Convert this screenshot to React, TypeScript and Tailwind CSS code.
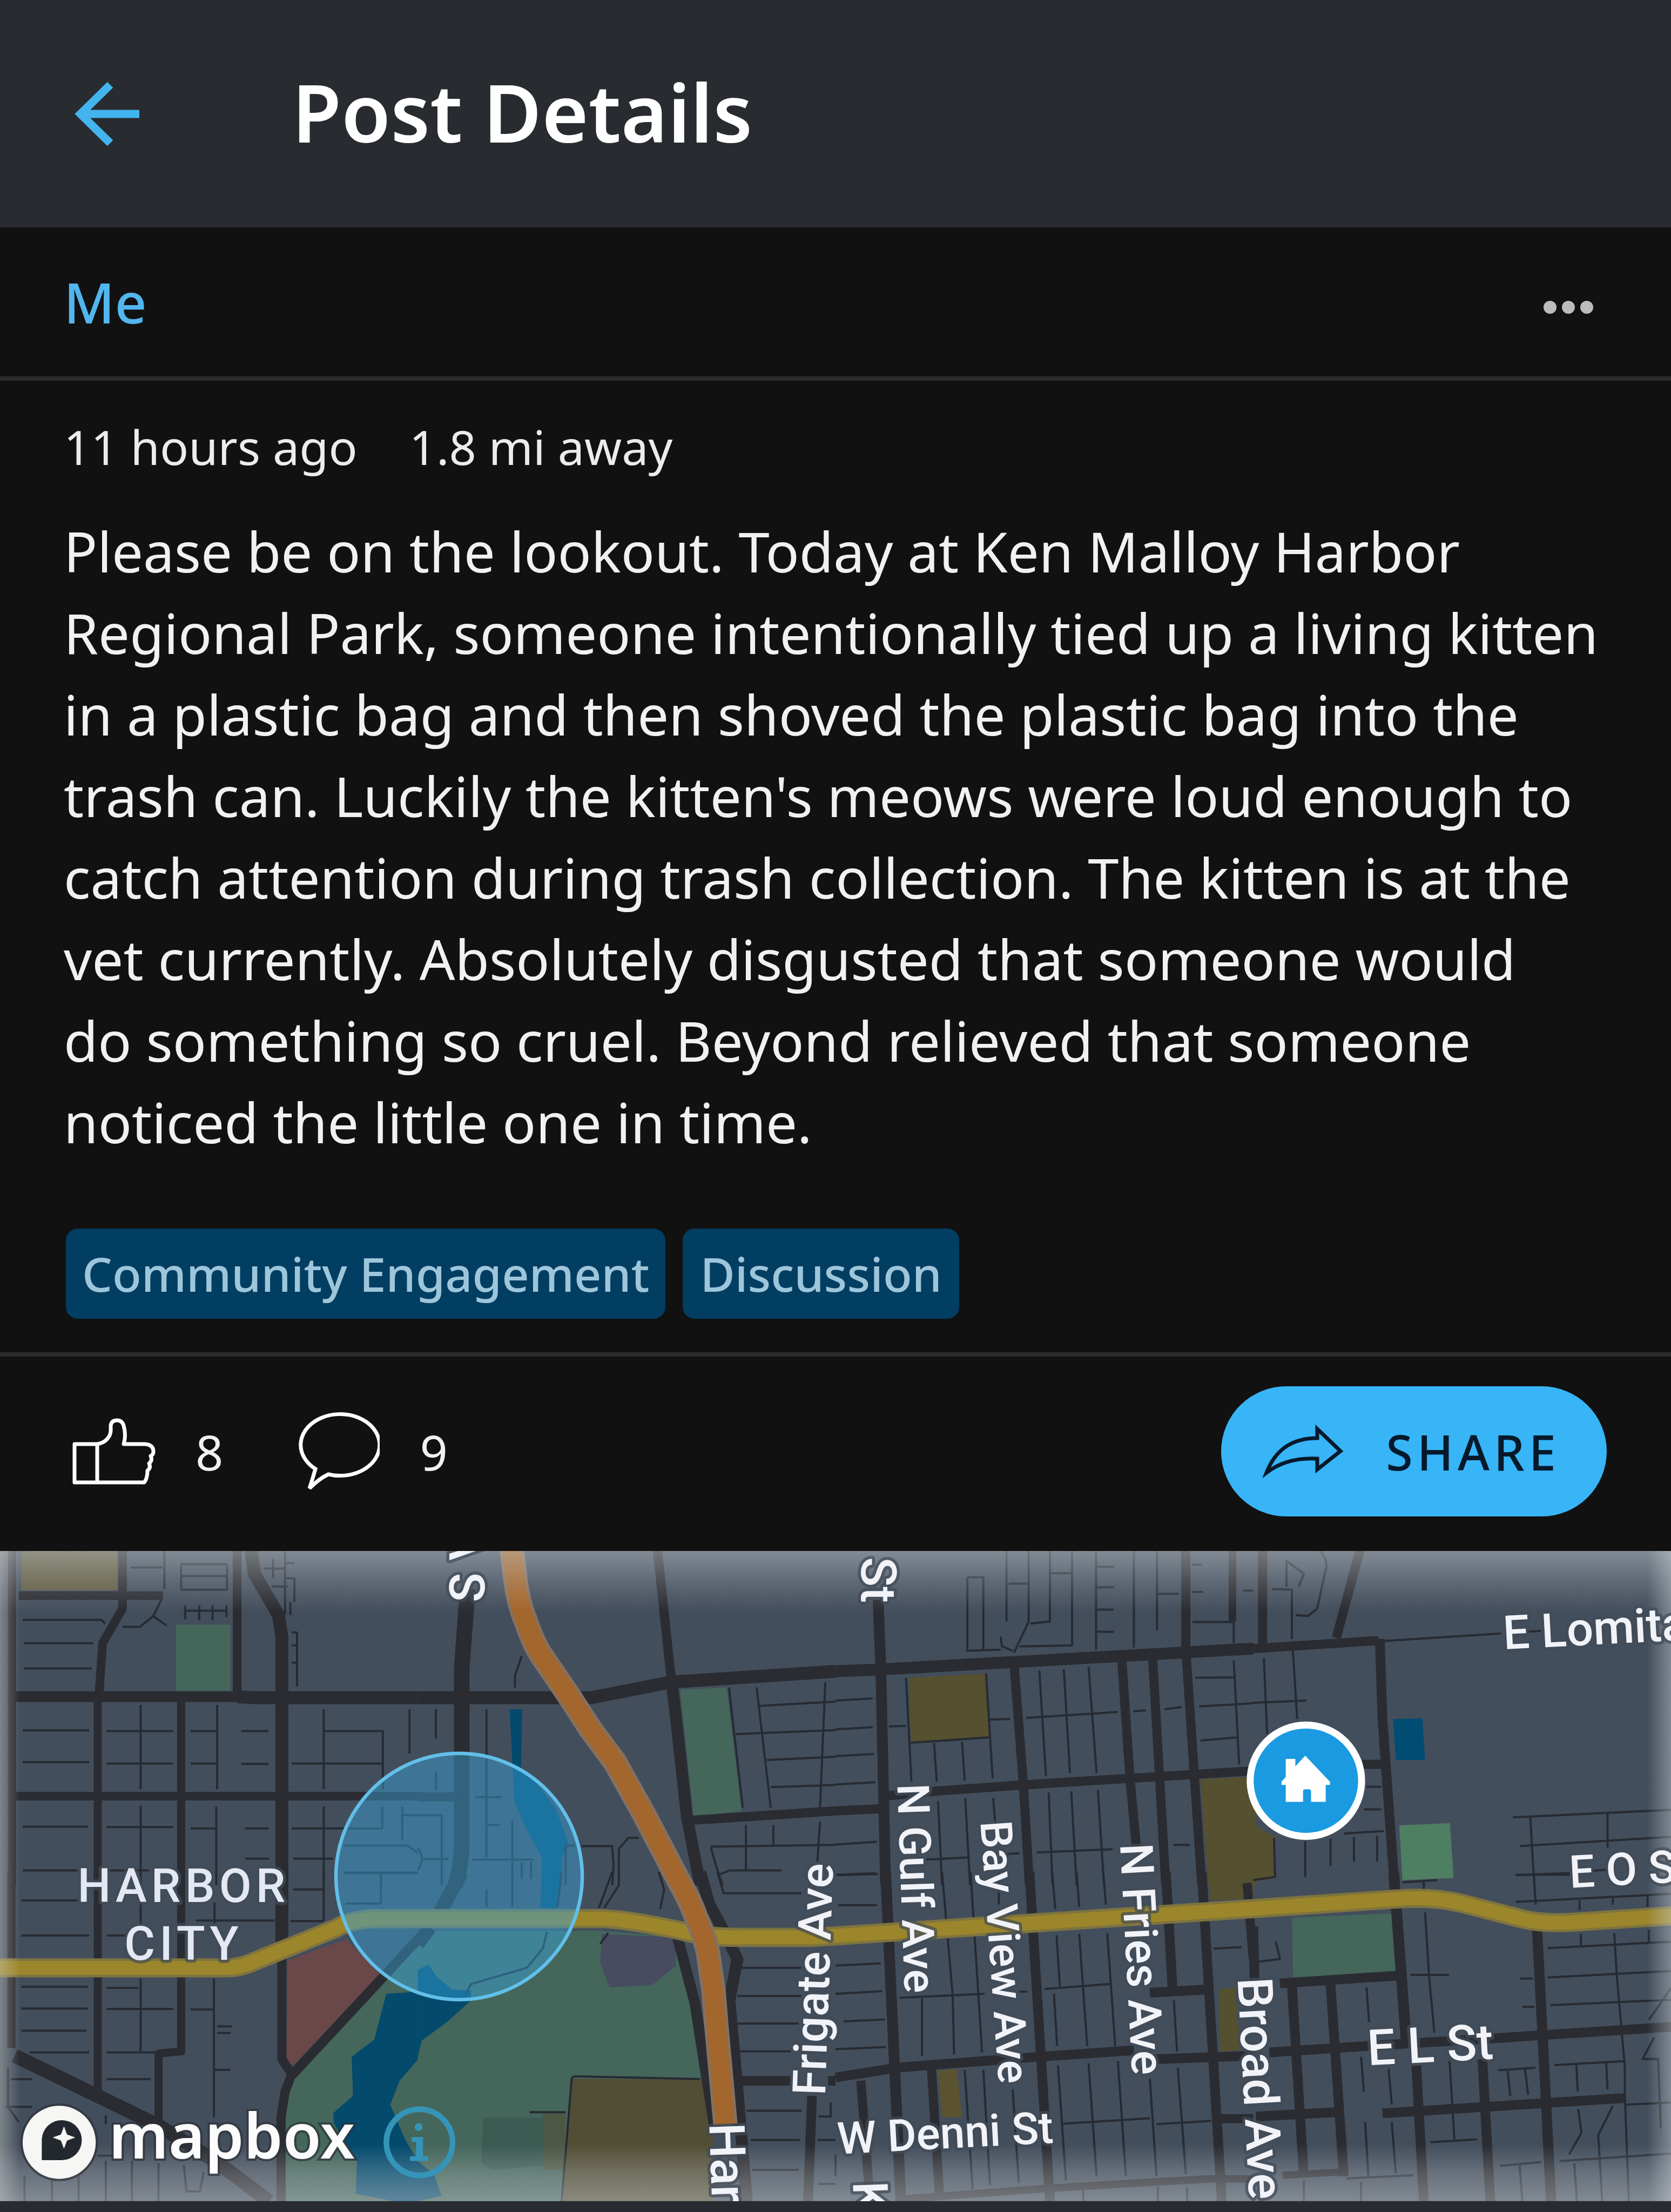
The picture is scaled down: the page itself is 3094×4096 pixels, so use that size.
type Road = { w: number; d: string };
type Area = { fill: string; d: string };
type Tile = { x: number; y: number; sy: number; areas: Area[]; minor: string; roads: Road[] };

const GREEN = "#44665b";
const BROWN = "#55502f";
const WATER = "#034a6d";
const ROAD = "#2a2c31";

const tiles: Tile[] = [
  {
    x: 0, y: 3550, sy: 0.4974,
    areas: [
      { fill: "#5f5b40", d: "M80 0H440V205H80Z" },
      { fill: GREEN, d: "M660 365H865V670H660Z" },
    ],
    minor:
      "M85 342H380L395 360M90 450H350M90 567H345M460 375H525L575 325L605 250M575 325L625 368M490 100H610M617 0V200M680 85H852M680 140H852M680 203H852M680 85V203M852 85V203M695 275V340M748 275V345M798 275V345M690 300H850M850 275V330M1070 0V320M990 105H1070M1025 60V150M1020 188H1080M1115 400V650M1095 400H1115M1095 460H1115M1095 540H1115M1075 80H1105M1075 150H1105V260M1090 260V320M85 853H335M85 1000H335M85 1298H330M85 1500H290M400 856H650M400 1006H650M400 1300H650M400 1500H560M528 735V1125M528 1200V1568M715 856H812M715 1006H812M715 1306H808M815 735V1125M812 1205V1568M905 856H1008M905 1008H1008M920 1306H1008M920 1446H1010M1215 755V1125M1215 1205V1568M1215 856H1437V1125M1095 1006H1435M1537 755V960M1095 1306H1435V1205M1100 1446H1250M1290 1385H1530L1568 1420M1290 1510H1568M1430 1520V1568M1510 1205V1360M1510 1245H1568",
    roads: [
      { w: 15, d: "M45 0V1568M367 700V1568M680 695V1568" },
      { w: 16, d: "M460 0V290L385 450L370 720M70 230H612M890 0V690M60 1157H1568" },
      { w: 20, d: "M60 697H890" },
      { w: 24, d: "M940 0L955 130L1045 320L1058 420V1568M890 697L960 702H1568" },
    ],
  },
  {
    x: 960, y: 3550, sy: 0.4974,
    areas: [
      { fill: GREEN, d: "M985 665L1160 655L1215 1225L1035 1250Z" },
      { fill: WATER, d: "M345 755H392L388 1030L450 1100L520 1220L565 1370L540 1450V1568H465V1440L400 1290L362 1180Z" },
    ],
    minor:
      "M390 510L365 600V655M68 755V890M68 1045V1130M258 755V1440M205 1450H435M215 1162H315M260 1290H310M0 1245H90V1568M20 1447H115M0 1395Q30 1447 0 1500M355 1270V1568M425 1460V1540M390 1460V1540M615 1388H730L735 1480L730 1568M830 1350H790L755 1400V1568M555 1385H590M555 1385V1568M1168 655L1220 1210M1272 655L1325 1210M1280 740L1568 720M1195 870L1568 852M1310 990L1568 975M1325 1115L1568 1105M1530 630L1510 1210M1510 1275L1500 1460M1232 1290V1500M1335 1290V1385M1100 1390L1568 1382M1100 1395L1130 1520L1170 1500H1365M1130 1520L1145 1568",
    roads: [
      { w: 29, d: "M187 200L165 570V1400Q160 1500 140 1568" },
      { w: 17, d: "M898 0L950 600" },
      { w: 22, d: "M950 600L970 800L1010 1250L1060 1568" },
      { w: 24, d: "M0 702H650L950 630L1568 580" },
      { w: 17, d: "M1030 1268L1568 1225M0 1160H165" },
    ],
  },
  {
    x: 1920, y: 3550, sy: 0.4974,
    areas: [
      { fill: BROWN, d: "M275 610L565 590L580 885L283 905Z" },
      { fill: BROWN, d: "M1370 1080L1580 1065V1568H1400Z" },
    ],
    minor:
      "M495 145V485L620 480M495 145H555V480M642 0V350M725 0V350L670 495M650 175H720M805 0V350L730 360M805 127H885M888 0V460L690 465M620 420L625 465L665 485M978 0V480M978 97H1045M978 192H1045M978 295H1045M978 397H1045M1120 0V470M1207 0V390M1207 222H1290M1340 213H1380M1340 87H1375M1340 352H1495V450M1530 207H1568M1495 530L1515 1010M1350 610L1495 608M1365 742L1568 728M1370 900L1510 885M1235 755L1300 745M1118 765L1165 760M265 610L285 1090M565 590L590 1075M283 910L580 885M370 910L380 1090M475 905L485 1085M0 715L140 705M0 848L140 838M200 835L265 832M0 972L145 962M0 1103L150 1093M580 803L655 800M715 795L1060 768M765 575L790 1065M857 570L880 1050M950 560L980 1050M0 1380L155 1368M10 1522L160 1517M385 1180L400 1568M487 1165L505 1568M592 1165L600 1290M340 1450L500 1440M640 1425L690 1420M755 1417L1040 1402M800 1140L815 1568M885 1135L905 1568M985 1130L1008 1568M1268 1382H1330",
    roads: [
      { w: 20, d: "M160 250L170 560L188 1568" },
      { w: 22, d: "M0 580L160 572L700 535L1568 475" },
      { w: 17, d: "M670 540L705 1100L728 1568M1075 530L1105 1070L1130 1400M1190 510L1240 1568M1315 0V480L1375 1568" },
      { w: 17, d: "M200 1155L360 1135L700 1105L1568 1040M0 1225L170 1215" },
      { w: 14, d: "M1490 0V350" },
    ],
  },
  {
    x: 2880, y: 3550, sy: 0.4974,
    areas: [
      { fill: "#014c72", d: "M525 800L635 797L645 990H535Z" },
      { fill: "#4f7f63", d: "M548 1292L738 1282L752 1535L560 1545Z" },
      { fill: BROWN, d: "M0 1290L75 1340V1530L0 1545Z" },
    ],
    minor:
      "M490 440L930 405M1030 397L1080 393M70 200L145 203V430M125 190V70L190 130L170 190M230 0Q290 60 270 120L240 290L205 325L160 320M148 470L165 800M40 520L52 870M0 725L200 715M425 1113H480M415 1218H480M340 1330L490 1318M195 1365V1530M290 1355V1480M378 1345V1460M465 1340V1460M78 1350L82 1530L0 1545M560 1555L690 1545M640 1550V1568M975 1255L1568 1220M1040 1255L1055 1568M1330 1235V1395M1000 1388L1568 1345M985 1522L1190 1512M1270 1502L1330 1497",
    roads: [
      { w: 17, d: "M35 0V460M405 0L312 425M410 1010H485" },
      { w: 17, d: "M0 475L470 438" },
      { w: 18, d: "M475 430L485 800L530 1568" },
    ],
  },
  {
    x: 0, y: 4300, sy: 0.4994,
    areas: [
      { fill: "#6a4748", d: "M1082 405L1300 310L1425 470L1100 890L1075 860Z" },
      { fill: GREEN, d: "M1570 310L1430 500L1105 950L1065 1110L1075 1515H1570Z" },
      {
        fill: WATER,
        d: "M1570 550L1450 560L1405 770L1320 850L1325 1030L1250 1110L1255 1160L1340 1330L1335 1480L1480 1515H1570V1330L1520 1230L1465 1070L1500 960L1570 860Z",
      },
    ],
    minor:
      "M80 130H290M80 292H335M400 292H475M80 528H330M400 533H520M80 628H330M400 630H650M715 632H805M80 730H325M110 830H335M400 830H580M400 953H565M40 953H120M528 130V240M528 490V830M805 140V240M803 490V1130M735 223H1030M1100 80H1215M1215 0V225M1090 225H1215M815 710H870M815 740H865M805 910H865M30 900V1080L70 1150M92 1400V1515M195 1420V1515M295 1400V1515M397 1120V1160M397 1330V1515M495 1330V1515M595 1340V1515M690 1350L700 1470H750L765 1380M365 1305H430M20 1080H120M1430 0V145H1295M1290 5H1568",
    roads: [
      { w: 15, d: "M43 0V810M367 0V1010M680 0V825L595 835V1150" },
      { w: 26, d: "M55 845L400 1050L600 1170L820 1340L1010 1515" },
      { w: 24, d: "M1058 0V320" },
      { w: 17, d: "M1058 320V860L1095 930L1070 1010L1055 1130V1515" },
      { w: 18, d: "M1095 935L1425 500L1568 310" },
    ],
  },
  {
    x: 960, y: 4300, sy: 0.4994,
    areas: [
      { fill: GREEN, d: "M0 270H680L990 300L1090 950V1515H0Z" },
      { fill: "#474c60", d: "M690 285L965 300L970 430L880 520L720 530L685 420Z" },
      { fill: "#524e36", d: "M575 950L1075 955L1110 1150V1515H545Z" },
      { fill: "#4d5744", d: "M470 1110H555L550 1370H470Z" },
      { fill: "#3b5a52", d: "M245 1130H470V1350L280 1370L240 1340Z" },
      { fill: WATER, d: "M0 450L40 425L70 480L130 540L200 545V590L110 690L15 775L0 850Z" },
      { fill: WATER, d: "M0 1330L60 1390L90 1490L0 1515Z" },
      { fill: WATER, d: "M465 0H540L520 165H460Z" },
    ],
    minor:
      "M730 0L680 165M755 0V60L700 165M905 0L925 80L910 170M715 280L685 330M585 940L1060 952M585 940L578 950L540 1515M420 1105H555M258 80V160M355 0V160M540 0L525 160M485 275L470 350L410 440L200 515L180 560M1145 97H1440M1125 0L1148 97M1210 440H1440M1200 570H1440M1200 697H1430M1205 825H1400M1235 1098H1440M1250 1233H1435M1500 1233H1568M1255 1370H1430M1505 1435H1568M1505 1125H1550V1060",
    roads: [
      { w: 26, d: "M165 0L85 180M45 255L0 330" },
      { w: 22, d: "M1060 0L1095 150L1140 250L1200 400L1170 590L1200 1000L1235 1515" },
      { w: 20, d: "M975 300L1040 600L1085 950L1115 1180" },
      { w: 18, d: "M1200 960H1400M1480 1030L1465 1515M1540 960H1568" },
    ],
  },
  {
    x: 1920, y: 4300, sy: 0.4994,
    areas: [
      { fill: "#5b5330", d: "M385 915L455 905L475 1125L400 1130Z" },
      { fill: BROWN, d: "M1440 540L1500 530L1520 820L1445 825Z" },
      { fill: BROWN, d: "M1400 0H1570V120L1405 130Z" },
    ],
    minor:
      "M0 12L150 5M10 152H155M0 430L170 420M0 560L175 548M30 687L185 678M0 815L190 805M400 0L440 570L445 840M507 0L550 830M613 0V150M813 0L825 170M905 0L915 160M1005 0L1015 150M830 290L842 525M915 285L945 800M1020 280L1050 800M240 578L560 560M690 550H720M785 538L1030 515M325 580V845M820 560L832 800M1270 590L1282 825M1420 352L1525 345M485 910L515 1460M555 910L580 1440M665 1000L688 1430M835 890L865 1420M950 880L980 1400M1060 870L1090 1400M1180 950L1205 1400M1285 900L1315 1390M850 1158L1180 1133M1205 1160L1410 1145M930 1460V1515M1210 1450V1515M1320 1450V1515M0 1300V1400",
    roads: [
      { w: 20, d: "M188 0L245 1515" },
      { w: 18, d: "M728 0L805 1515M1240 0L1265 530M1180 555L1390 540M1375 0L1450 1515" },
      { w: 18, d: "M0 945L230 900L760 850L1120 820M1180 862L1568 845" },
      { w: 17, d: "M95 960L125 1440M360 900L390 1480M1440 1135H1568M1545 50L1568 400" },
      { w: 14, d: "M250 1505L800 1455L1400 1412H1568" },
    ],
  },
  {
    x: 2880, y: 4300, sy: 0.4994,
    areas: [
      { fill: GREEN, d: "M145 210L520 190L535 465L150 485Z" },
      { fill: BROWN, d: "M0 0H78V30L0 45Z" },
    ],
    minor:
      "M1053 0L1060 150M640 50V80M645 185L660 480L680 740M590 473H735M985 12H1190M985 137L1568 100M1225 130V175M1480 105V160M1350 110V150M1230 285V345M1485 265V320M1105 350L1568 320M1355 280L1365 480L1395 900V1030L1410 1515M1000 490H1050M1105 485L1568 455M1115 612L1568 588M1010 620H1055M1568 535L1485 680M1505 760L1462 860H1520L1530 1180M920 912L1060 900M1130 888L1390 870M955 915L965 1030M1020 905L1032 1025M1213 885L1218 1010M1325 880L1330 1000M425 530L435 690M405 850L415 1010M508 905L520 1070M737 870L755 1230M665 1243L840 1230M420 1150L432 1400M520 1150L535 1385M1220 1090L1232 1200L1185 1300M1350 1075L1295 1210L1310 1515M1400 1070L1568 1060M925 1352L1080 1335M1000 1350L1010 1515M1150 1330L1568 1295M1205 1340L1215 1515M85 320L100 400L20 412M190 1420V1515M405 1425V1515M350 1410L600 1395",
    roads: [
      { w: 20, d: "M527 0L575 790" },
      { w: 19, d: "M1065 250L1118 1515" },
      { w: 18, d: "M100 512L560 475M145 520L190 1400M290 515L340 1400M0 250L5 500" },
      { w: 18, d: "M60 830L430 800L900 765L1568 712M10 1125L310 1105M485 1110L1395 1040" },
      { w: 18, d: "M612 890L640 1515M860 860L890 1515" },
      { w: 13, d: "M110 1395L330 1380" },
    ],
  },
];

type Label = { text: string; x: number; y: number; r: number; size: number };
const streets: Label[] = [
  { text: "S V", x: 1113, y: 3680, r: -90, size: 112 },
  { text: "St", x: 1980, y: 3576, r: 90, size: 112 },
  { text: "E Lomita", x: 3456, y: 3788, r: -3, size: 108 },
  { text: "E O S", x: 3608, y: 4336, r: -3, size: 104 },
  { text: "E L St", x: 3144, y: 4744, r: -3, size: 114 },
  { text: "W Denni St", x: 1926, y: 4948, r: -3, size: 102 },
  { text: "Frigate Ave", x: 1896, y: 4814, r: -88, size: 106 },
  { text: "N Gulf Ave", x: 2062, y: 4098, r: 88, size: 102 },
  { text: "Bay View Ave", x: 2253, y: 4184, r: 86, size: 101 },
  { text: "N Fries Ave", x: 2574, y: 4236, r: 87, size: 105 },
  { text: "Broad Ave", x: 2844, y: 4544, r: 87, size: 112 },
  { text: "Har", x: 1630, y: 4878, r: 88, size: 114 },
  { text: "K", x: 1960, y: 5012, r: 88, size: 112 },
];

const HIGHWAY =
  "M1175 3540L1177 3565L1183 3615Q1190 3680 1208 3722Q1222 3765 1242 3799L1303 3888L1358 3973L1413 4047L1480 4167L1560 4320Q1588 4370 1600 4405Q1620 4450 1627 4485L1640 4575L1646 4650L1667 4880";
const ARTERIAL =
  "M-10 4520H520Q550 4520 580 4507L770 4430Q810 4407 870 4407H1389Q1450 4410 1566 4435Q1620 4450 1700 4450H1866L2880 4384L3204 4362Q3290 4355 3360 4372L3500 4408Q3540 4418 3600 4416L3850 4400";

function NeighborhoodMap() {
  return (
    <svg viewBox="0 3562 3840 1494" className="block h-auto w-full bg-[#434e5c]" role="img" aria-label="Map of Harbor City">
      <defs>
        <linearGradient id="fade-top" x1="0" y1="0" x2="0" y2="1">
          <stop offset="0" stopColor="#d0d6da" stopOpacity=".45" />
          <stop offset=".5" stopColor="#d0d6da" stopOpacity=".2" />
          <stop offset="1" stopColor="#d0d6da" stopOpacity="0" />
        </linearGradient>
        <linearGradient id="fade-bottom" x1="0" y1="1" x2="0" y2="0">
          <stop offset="0" stopColor="#cfd3d6" stopOpacity=".45" />
          <stop offset=".5" stopColor="#cfd3d6" stopOpacity=".26" />
          <stop offset="1" stopColor="#cfd3d6" stopOpacity="0" />
        </linearGradient>
        <linearGradient id="fade-left" x1="0" y1="0" x2="1" y2="0">
          <stop offset="0" stopColor="#dcdad4" stopOpacity=".38" />
          <stop offset="1" stopColor="#dcdad4" stopOpacity="0" />
        </linearGradient>
        <linearGradient id="fade-right" x1="1" y1="0" x2="0" y2="0">
          <stop offset="0" stopColor="#d6dce0" stopOpacity=".4" />
          <stop offset="1" stopColor="#d6dce0" stopOpacity="0" />
        </linearGradient>
      </defs>

      {tiles.map((t) => (
        <g key={`${t.x}-${t.y}-areas`} transform={`translate(${t.x} ${t.y}) scale(0.6122 ${t.sy})`}>
          {t.areas.map((a) => (
            <path key={a.d} d={a.d} fill={a.fill} />
          ))}
        </g>
      ))}
      <g fill="none" strokeLinejoin="round">
        {tiles.map((t) => (
          <g key={`${t.x}-${t.y}-minor`} transform={`translate(${t.x} ${t.y}) scale(0.6122 ${t.sy})`}>
            <path d={t.minor} stroke="#262b33" strokeWidth="4" vectorEffect="non-scaling-stroke" />
          </g>
        ))}
        {tiles.map((t) => (
          <g key={`${t.x}-${t.y}-roads`} transform={`translate(${t.x} ${t.y}) scale(0.6122 ${t.sy})`} stroke={ROAD}>
            {t.roads.map((r) => (
              <path key={r.d} d={r.d} strokeWidth={r.w} vectorEffect="non-scaling-stroke" />
            ))}
          </g>
        ))}
        <path d={ARTERIAL} stroke="#7f743f" strokeWidth="44" />
        <path d={ARTERIAL} stroke="#9c862b" strokeWidth="32" />
        <path d={HIGHWAY} stroke="#86705f" strokeWidth="56" />
        <path d={HIGHWAY} stroke="#a3662c" strokeWidth="43" />
      </g>

      <circle cx="1055" cy="4310" r="283" fill="#3aa6dd" fillOpacity=".45" stroke="#62bfe8" strokeWidth="8" />

      <rect x="0" y="3562" width="3840" height="140" fill="url(#fade-top)" />
      <rect x="0" y="4926" width="3840" height="130" fill="url(#fade-bottom)" />
      <rect x="0" y="3562" width="46" height="1494" fill="url(#fade-left)" />
      <rect x="3786" y="3562" width="54" height="1494" fill="url(#fade-right)" />

      <g
        className="font-['Roboto',sans-serif] font-medium"
        fill="#f1f3f8"
        stroke="#414b59"
        strokeOpacity=".7"
        strokeWidth="14"
        strokeLinejoin="round"
        paintOrder="stroke"
      >
        {streets.map((l) => (
          <text key={l.text} transform={`translate(${l.x} ${l.y}) rotate(${l.r})`} fontSize={l.size}>
            {l.text}
          </text>
        ))}
        <g fontSize="108" fill="#e3e8f3" textAnchor="middle" className="tracking-[10px]">
          <text x="422" y="4369">HARBOR</text>
          <text x="422" y="4501">CITY</text>
        </g>
      </g>

      <g>
        <circle cx="3001" cy="4090" r="128" fill="#1a9ae0" stroke="#fff" strokeWidth="16" />
        <path
          transform="translate(2880 3550) scale(.6122 .4974)"
          d="M195 970L288 1090V1105H272V1183H217V1135Q217 1125 209 1125H193Q187 1125 187 1135V1183H122V1105H106V1090L122 1068V985H158V1020Z"
          fill="#fff"
        />
      </g>

      <g stroke="#2d3138" strokeOpacity=".7" strokeWidth="10" paintOrder="stroke">
        <circle cx="136" cy="4921" r="84" fill="#f6f6f4" />
        <path d="M96 4962V4914A46 46 0 1 1 142 4962Z" fill="#23282f" stroke="none" />
        <path d="M147 4884L154 4903L173 4910L154 4917L147 4936L140 4917L121 4910L140 4903Z" fill="#f6f6f4" stroke="none" />
        <text x="250" y="4958" fontSize="143" fill="#fcfcfc" className="font-semibold">
          mapbox
        </text>
      </g>

      <g>
        <circle cx="964" cy="4921" r="76" fill="none" stroke="#3595b8" strokeWidth="13" />
        <circle cx="962" cy="4886" r="9" fill="#3595b8" />
        <path d="M946 4909H972V4953H984V4964H942V4953H956V4920H946Z" fill="#3595b8" />
      </g>
    </svg>
  );
}

export default function App() {
  return (
    <main className="min-h-screen bg-[#282c31] font-['Noto_Sans',sans-serif] text-[#f1f1f1]">
      <header className="flex h-[421px] items-center bg-[#282c30] pl-[136px]">
        <button type="button" aria-label="Back" className="mr-[282px]">
          <svg viewBox="0 0 123 120" className="block h-[120px] w-[123px]" fill="none" stroke="#43b4ee" strokeWidth="15">
            <path d="M68 6L13 60L68 114M13 60H122" />
          </svg>
        </button>
        <h1 className="pb-2 text-[148px] leading-[200px] font-semibold text-white">Post Details</h1>
      </header>

      <article className="bg-[#111111]">
        <div className="flex h-[284px] items-center justify-between border-b-8 border-[#2b2b2b] pr-[144px] pl-[118px]">
          <a href="#me" className="text-[103px] leading-[140px] font-medium text-[#52b6ee]">
            Me
          </a>
          <button type="button" aria-label="More options" className="flex gap-[10px] pt-5">
            <span className="size-6 rounded-full bg-[#bcbcbc]" />
            <span className="size-6 rounded-full bg-[#bcbcbc]" />
            <span className="size-6 rounded-full bg-[#bcbcbc]" />
          </button>
        </div>

        <div className="border-b-8 border-[#2b2b2b] px-[118px] pt-[62px] pb-[62px]">
          <p className="flex gap-[96px] text-[88px] leading-[120px] text-[#ececec]">
            <span>11 hours ago</span>
            <span>1.8 mi away</span>
          </p>
          <p className="mt-[58px] text-[103px] leading-[151px]">
            Please be on the lookout. Today at Ken Malloy Harbor
            <br />
            Regional Park, someone intentionally tied up a living kitten
            <br />
            in a plastic bag and then shoved the plastic bag into the
            <br />
            trash can. Luckily the kitten's meows were loud enough to
            <br />
            catch attention during trash collection. The kitten is at the
            <br />
            vet currently. Absolutely disgusted that someone would
            <br />
            do something so cruel. Beyond relieved that someone
            <br />
            noticed the little one in time.
          </p>
          <div className="mt-[122px] flex gap-8 pl-1 text-[88px] leading-[167px] font-medium text-[#9dc6db]">
            <a href="#community-engagement" className="rounded-[22px] bg-[#023e62] px-[30px]">
              Community Engagement
            </a>
            <a href="#discussion" className="rounded-[22px] bg-[#023e62] px-[32px]">
              Discussion
            </a>
          </div>
        </div>

        <div className="flex items-center pt-[55px] pr-[119px] pb-16 pl-[134px] text-[90px] leading-[120px]">
          <button type="button" aria-label="Like, 8" className="flex items-center gap-[74px]">
            <svg viewBox="0 0 154 124" className="block h-[124px] w-[154px]" fill="none" stroke="#fff" strokeWidth="7" strokeLinejoin="round">
              <path d="M4 48H46C60 46 70 36 71 24V14Q72 4 83 4Q92 4 95 14Q100 32 95 48H134Q150 49 150 62Q150 68 145 70Q149 78 142 84Q146 92 139 97Q139 112 133 119H4ZM46 48V119" />
            </svg>
            <span>8</span>
          </button>
          <button type="button" aria-label="Comments, 9" className="ml-[136px] flex items-center gap-[74px]">
            <svg viewBox="0 0 154 147" className="block h-[147px] w-[154px]" fill="none" stroke="#fff" strokeWidth="7">
              <path d="M35 106A73 57 0 1 1 59 116Q42 124 24 142Q30 124 35 106Z" />
            </svg>
            <span>9</span>
          </button>
          <button
            type="button"
            className="ml-auto flex h-[241px] items-center gap-[78px] rounded-full bg-[#37b5f7] pr-[86px] pl-[76px] font-medium tracking-[8px] text-[#06192b]"
          >
            <svg viewBox="0 0 151 106" className="block h-[106px] w-[151px]" fill="none" stroke="#06192b" strokeWidth="7">
              <path d="M8 92C22 56 48 28 102 28V11L145 52L102 86V66C64 64 34 72 8 92Z" />
            </svg>
            SHARE
          </button>
        </div>
      </article>

      <NeighborhoodMap />
    </main>
  );
}
